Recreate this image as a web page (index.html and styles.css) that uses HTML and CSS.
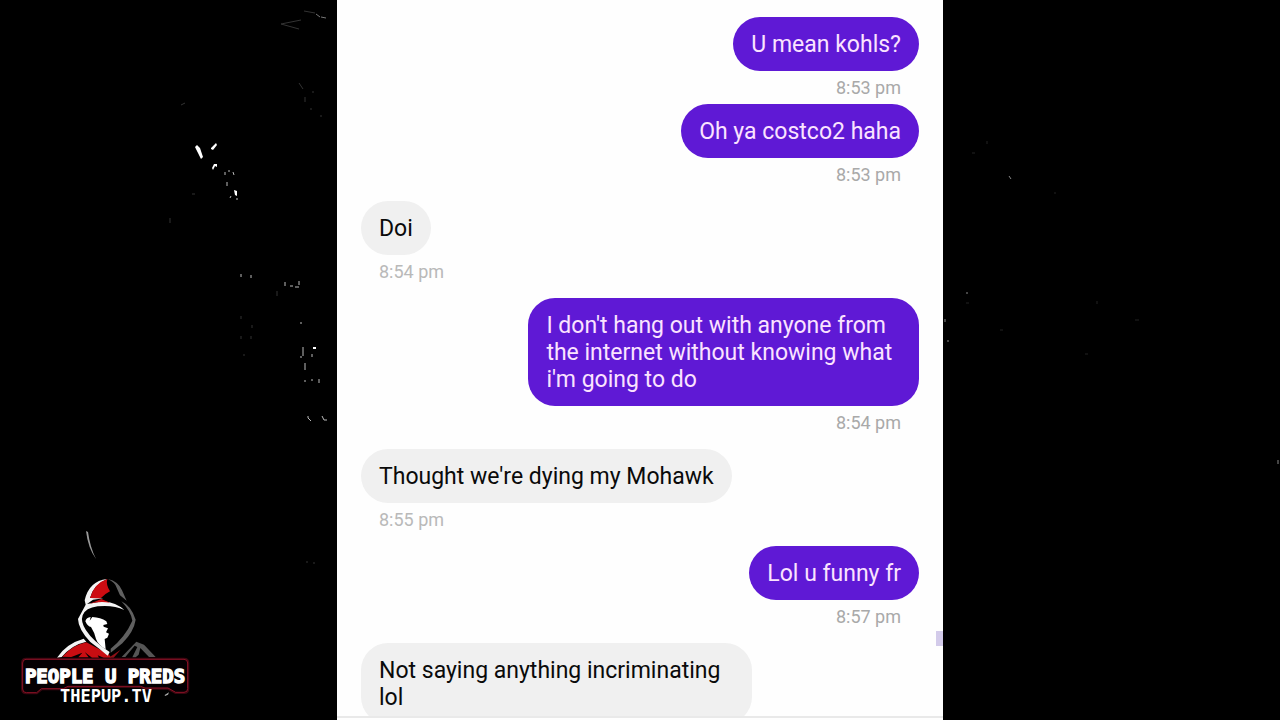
FILE: index.html
```html
<!DOCTYPE html>
<html lang="en">
<head>
    <meta charset="UTF-8">
    <meta name="viewport" content="width=device-width, initial-scale=1.0">
    <title>People U Preds</title>
    <link rel="stylesheet" href="styles.css">
</head>
<body>

<div class="stage">
    <aside class="side side-left">
        <svg class="dust" viewBox="0 0 337 720" aria-hidden="true">
            <g fill="none" stroke="#333">
                <path d="M281 24l20-4M281 24l18 5M304 11l11 2"/>
                <path d="M316 14l4 3M321 17l5 1" stroke="#777"/>
                <path d="M299 83l4 6M305 97v5M311 108v2M320 116h2M313 91v2"/>
                <path d="M181 105l4-2M170 218v5M192 194h3M241 316v3M252 325v3M241 336v3M251 336v3M243 355h2M277 291v5"/>
                <path d="M306 562h2M313 563h2"/>
            </g>
            <g fill="none" stroke="#bbb">
                <path d="M241 274v3M251 275v3M285 282v4M290 286h3M299 281v4M295 287h4M301 322v2M303 347v9M301 356v2M305 363v7M312 354v3M305 380v2M311 380h2M319 379v4M308 416v2l3 3M322 416l2 4h3"/>
                <path d="M225 172v3M229 170v2M233 172l1 3M227 182v4M230 198l1-2M237 198v2"/>
            </g>
            <g fill="#fff">
                <path d="M195 147l2-2 3 3 3 9-2 2-3-6zM211 148l5-5 1 2-4 5-2-1zM212 168l2-4h3v3l-2-1-2 4zM234 190l3 1v5l-2-1zM313 347h3v2h-3z"/>
                <path d="M86 531l2 1q2 15 8 27q-8-11-10-28z" fill="#999"/>
            </g>
        </svg>

        <svg class="logo" viewBox="0 0 600 600" role="img" aria-label="People U Preds">
            <!-- shoulders -->
            <path fill="#f4f4f4" d="M141 413Q168 371 221 356L229 365Q186 374 155 411Z"/>
            <path fill="#c90d12" d="M157 410Q188 375 229 367L296 403 304 413H281L263 406 267 413H246L224 396 236 412H205L217 398 184 411Z"/>
            <path fill="#8f1017" d="M296 413L332 389 311 413Z"/>
            <path fill="#555" d="M335 411L379 365 402 374 437 411H417L391 384 386 404 377 412H367L382 381 374 377 346 411Z"/>
            <!-- hood -->
            <path fill="#f4f4f4" d="M291 177Q237 183 224 241L227 254 204 297Q205 328 241 366Q267 385 293 407L299 396Q250 365 228 331Q211 305 218 286Q226 264 263 259Q310 254 343 270Q319 248 279 244L231 252 249 239 280 235 240 234Q250 195 291 177Z"/>
            <path fill="#cd0c12" d="M292 177Q252 190 240 234L272 235Q284 222 300 214Q287 193 292 177ZM239 251L274 237 300 248Q268 243 239 251Z"/>
            <path fill="#606060" d="M294 177Q325 184 336 211L350 242 330 226 320 203Q316 188 294 177ZM334 244Q363 257 377 299Q372 334 337 370L302 398 302 386Q346 350 367 302Q362 273 334 244Z"/>
            <!-- face -->
            <path fill="#fff" d="M226 304Q229 292 242 291L239 302 247 291Q272 292 289 304L292 312 280 315 281 320 294 325 288 337 297 341 292 353 284 357 287 388Q264 374 258 357Q254 338 243 321Q233 320 226 304Z"/>
            <!-- nameplate -->
            <path class="plate-glow" d="M48 418H522Q533 418 533 429V506Q533 517 522 517H497L474 504H405L392 499H174L160 506H94L80 518H49Q38 518 38 507V429Q38 418 48 418Z"/>
            <path class="plate" d="M48 418H522Q533 418 533 429V506Q533 517 522 517H497L474 504H405L392 499H174L160 506H94L80 518H49Q38 518 38 507V429Q38 418 48 418Z"/>
            <text class="logo-name" x="285" y="488">PEOPLE U PREDS</text>
            <text class="logo-site" x="288" y="545">THEPUP.TV</text>
            <path fill="#aaa" d="M464 525L477 517 474 524 465 528Z"/>
        </svg>
    </aside>

    <main class="phone">
        <div class="chat">
            <div class="message sent">
                <p class="bubble">U mean kohls?</p>
                <time class="time">8:53 pm</time>
            </div>
            <div class="message sent">
                <p class="bubble">Oh ya costco2 haha</p>
                <time class="time">8:53 pm</time>
            </div>
            <div class="message received turn">
                <p class="bubble">Doi</p>
                <time class="time">8:54 pm</time>
            </div>
            <div class="message sent turn">
                <p class="bubble">I don't hang out with anyone from the internet without knowing what i'm going to do</p>
                <time class="time">8:54 pm</time>
            </div>
            <div class="message received turn">
                <p class="bubble">Thought we're dying my Mohawk</p>
                <time class="time">8:55 pm</time>
            </div>
            <div class="message sent turn">
                <p class="bubble">Lol u funny fr</p>
                <time class="time">8:57 pm</time>
            </div>
            <div class="message received turn">
                <p class="bubble">Not saying anything incriminating lol</p>
            </div>
        </div>
        <div class="chat-bottom"></div>
        <span class="scroll-mark"></span>
    </main>

    <aside class="side side-right">
        <svg class="dust" viewBox="0 0 337 720" aria-hidden="true">
            <g fill="none" stroke="#222">
                <path d="M44 141v3M29 153h3M111 193h2M23 303h3M154 301v3M57 330h3M192 320h4M142 354h3"/>
            </g>
            <path fill="none" stroke="#888" d="M66 176l2 3M24 292v2M2 319v3M5 340v2M335 460v4"/>
        </svg>
    </aside>
</div>

</body>
</html>
```
FILE: styles.css
```css
* { box-sizing: border-box; }
body {
    margin: 0;
    background: #000;
    font-family: Roboto, "Liberation Sans", sans-serif;
}
.stage {
    display: grid;
    grid-template-columns: 1fr minmax(auto, 606px) 1fr;
    height: 100vh;
    overflow: hidden;
}

/* black side panels */
.side {
    position: relative;
    display: flex;
    align-items: flex-end;
    overflow: hidden;
}
.side-left { padding-left: 10px; }
.dust {
    position: absolute;
    top: 0;
    left: 0;
    width: 337px;
    height: 720px;
}
.logo {
    width: 200px;
    height: 200px;
}
.plate, .plate-glow {
    fill: #050003;
    stroke: #8c1226;
    stroke-width: 3;
}
.plate-glow {
    stroke: #3a0710;
    stroke-width: 10;
}
.logo-name, .logo-site {
    font-family: "DejaVu Sans Mono", monospace;
    font-weight: bold;
    text-anchor: middle;
    fill: #fff;
}
.logo-name {
    font-size: 57px;
    stroke: #fff;
    stroke-width: 4;
}
.logo-site { font-size: 51px; }

/* chat */
.phone {
    position: relative;
    display: flex;
    flex-direction: column;
    min-height: 0;
    background: #fefefe;
}
.chat {
    flex: 1;
    min-height: 0;
    padding: 17px 24px 0;
    overflow: hidden;
}
.message {
    display: flex;
    flex-direction: column;
    align-items: flex-start;
}
.sent { align-items: flex-end; }
.turn { margin-top: 10px; }
.bubble {
    max-width: 70%;
    margin: 0;
    padding: 14px 18px 13px;
    border-radius: 27px;
    background: #f0f0f0;
    color: #0a0a0a;
    font-size: 23px;
    line-height: 27px;
}
.sent .bubble {
    background: #5f19d5;
    color: #fbe3ff;
}
.time {
    padding: 5px 18px 4px;
    color: #b9b9b9;
    font-size: 18px;
    line-height: 24px;
}
.sent .time { color: #a9a9a9; }
.chat-bottom {
    height: 4px;
    border-top: 2px solid #e9e9e9;
}
.scroll-mark {
    position: absolute;
    right: 0;
    bottom: 74px;
    width: 7px;
    height: 15px;
    background: #d3cbea;
}
```
